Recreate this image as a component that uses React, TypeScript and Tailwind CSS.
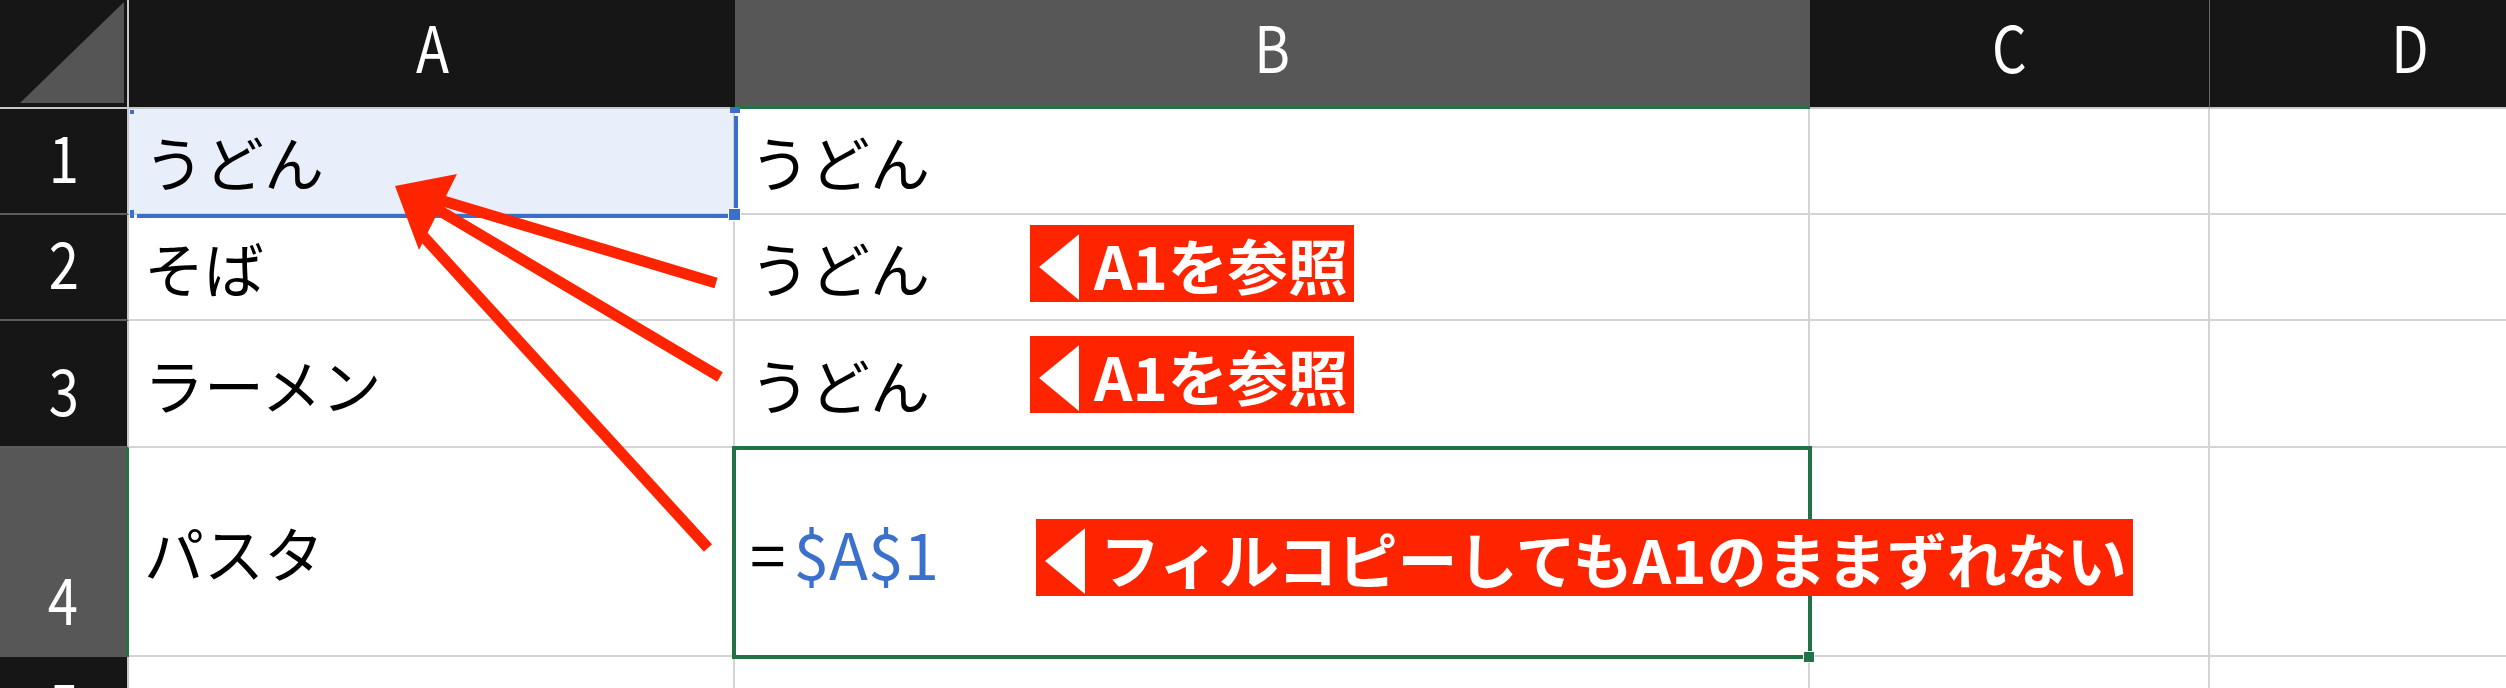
const jp = "font-['Noto_Sans_CJK_JP','Noto_Sans',sans-serif]";

const Label = ({ text, pos }: { text: string; pos: string }) => {
  return (
    <div className={`absolute z-10 flex h-[77px] items-center bg-[#ff2400] pl-[6px] pr-[6px] font-bold text-white leading-none text-[60px] whitespace-nowrap ${pos}`}>
      <span className="mr-[-12px] inline-block origin-left scale-x-[0.7] text-[70px]">◀</span>
      <span>{text}</span>
    </div>
  );
};

const RowHead = ({ n, active }: { n: number; active?: boolean }) => {
  return (
    <div
      className={
        active
          ? "flex items-end justify-center border-r-[3px] border-b-2 border-r-[#217346] border-b-[#575757] bg-[#575757] pb-[26px] text-[64px] leading-none text-white"
          : "flex items-end justify-center border-r-2 border-b-2 border-r-[#c8c8c8] border-b-[#5c5c5c] bg-[#161616] pb-[26px] text-[64px] leading-none text-white"
      }
    >
      <span className="inline-block scale-x-[0.85]">{n}</span>
    </div>
  );
};

const Cell = ({ children }: { children?: React.ReactNode }) => {
  return (
    <div className="relative flex items-center border-r-2 border-b-2 border-[#d4d4d4] bg-white pl-[15px] text-[60px] leading-none text-black">
      {children}
    </div>
  );
};

export default function App() {
  return (
    <div className={`relative h-[688px] w-[2506px] overflow-hidden bg-white ${jp}`}>
      <div className="grid w-[2610px] grid-cols-[129px_606px_1075px_400px_400px] grid-rows-[109px_106px_106px_127px_209px_106px]">
        {/* header row */}
        <div className="relative border-r-2 border-b-2 border-[#c8c8c8] bg-[#161616]">
          <svg className="absolute left-0 top-0" width="127" height="107">
            <polygon points="20,103 124,103 124,2" fill="#555555" />
          </svg>
        </div>
        <div className="flex justify-center border-b-2 border-[#c8c8c8] bg-[#161616] pt-[13px] text-[64px] leading-none text-white">
          <span className="inline-block scale-x-[0.85]">A</span>
        </div>
        <div className="flex justify-center border-b-[3px] border-[#217346] bg-[#575757] pt-[13px] text-[64px] leading-none text-white">
          <span className="inline-block scale-x-[0.85]">B</span>
        </div>
        <div className="flex justify-center border-r border-b-2 border-r-[#6b6b6b] border-b-[#c8c8c8] bg-[#161616] pt-[13px] text-[64px] leading-none text-white">
          <span className="inline-block scale-x-[0.85]">C</span>
        </div>
        <div className="flex justify-center border-b-2 border-[#c8c8c8] bg-[#161616] pt-[13px] text-[64px] leading-none text-white">
          <span className="inline-block scale-x-[0.85]">D</span>
        </div>

        {/* row 1 */}
        <RowHead n={1} />
        <div className="relative flex items-center border-r-2 border-b-2 border-[#d4d4d4] bg-[#e9effa] pl-[15px] text-[60px] leading-none text-black">
          うどん
          <div className="absolute right-[-5px] top-[7px] bottom-[2px] z-10 w-[4px] bg-[#3a6fcb]" />
          <div className="absolute left-[8px] right-[2px] bottom-[-5px] z-10 h-[4px] bg-[#3a6fcb]" />
          <div className="absolute right-[-7px] bottom-[-7px] z-10 h-[11px] w-[11px] bg-[#3a6fcb] ring-1 ring-white" />
          <div className="absolute right-[-7px] top-[-2px] z-10 h-[6px] w-[10px] bg-[#3a6fcb]" />
          <div className="absolute left-[1px] top-[1px] z-10 h-[4px] w-[4px] bg-[#3a6fcb]" />
          <div className="absolute left-[1px] bottom-[-5px] z-10 h-[8px] w-[4px] bg-[#3a6fcb]" />
        </div>
        <Cell>うどん</Cell>
        <Cell />
        <Cell />

        {/* row 2 */}
        <RowHead n={2} />
        <Cell>そば</Cell>
        <Cell>
          うどん
          <Label text="A1を参照" pos="left-[295px] top-[10px]" />
        </Cell>
        <Cell />
        <Cell />

        {/* row 3 */}
        <RowHead n={3} />
        <Cell>ラーメン</Cell>
        <Cell>
          うどん
          <Label text="A1を参照" pos="left-[295px] top-[15px]" />
        </Cell>
        <Cell />
        <Cell />

        {/* row 4 */}
        <RowHead n={4} active />
        <Cell>パスタ</Cell>
        <Cell>
          <span className="text-[64px]">
            <span className="mr-[8px]">=</span>
            <span className="text-[#3b70cc]">$A$1</span>
          </span>
          <div className="absolute left-[-3px] top-[-2px] right-[-4px] bottom-[-4px] z-10 border-4 border-[#217346]" />
          <div className="absolute right-[-6px] bottom-[-7px] z-10 h-[10px] w-[10px] bg-[#217346] ring-1 ring-white" />
          <Label text="フィルコピーしてもA1のままずれない" pos="left-[301px] top-[71px]" />
        </Cell>
        <Cell />
        <Cell />

        {/* row 5 */}
        <RowHead n={5} />
        <Cell />
        <Cell />
        <Cell />
        <Cell />
      </div>

      {/* arrows */}
      <svg className="pointer-events-none absolute left-0 top-0 z-20" width="2506" height="688">
        <g stroke="#ff2400" strokeWidth="11" fill="none">
          <line x1="716" y1="283" x2="430" y2="197" />
          <line x1="720" y1="377" x2="430" y2="205" />
          <line x1="708" y1="548" x2="423" y2="236" />
        </g>
        <polygon points="395,186 457,174 419,250" fill="#ff2400" />
      </svg>
    </div>
  );
}
